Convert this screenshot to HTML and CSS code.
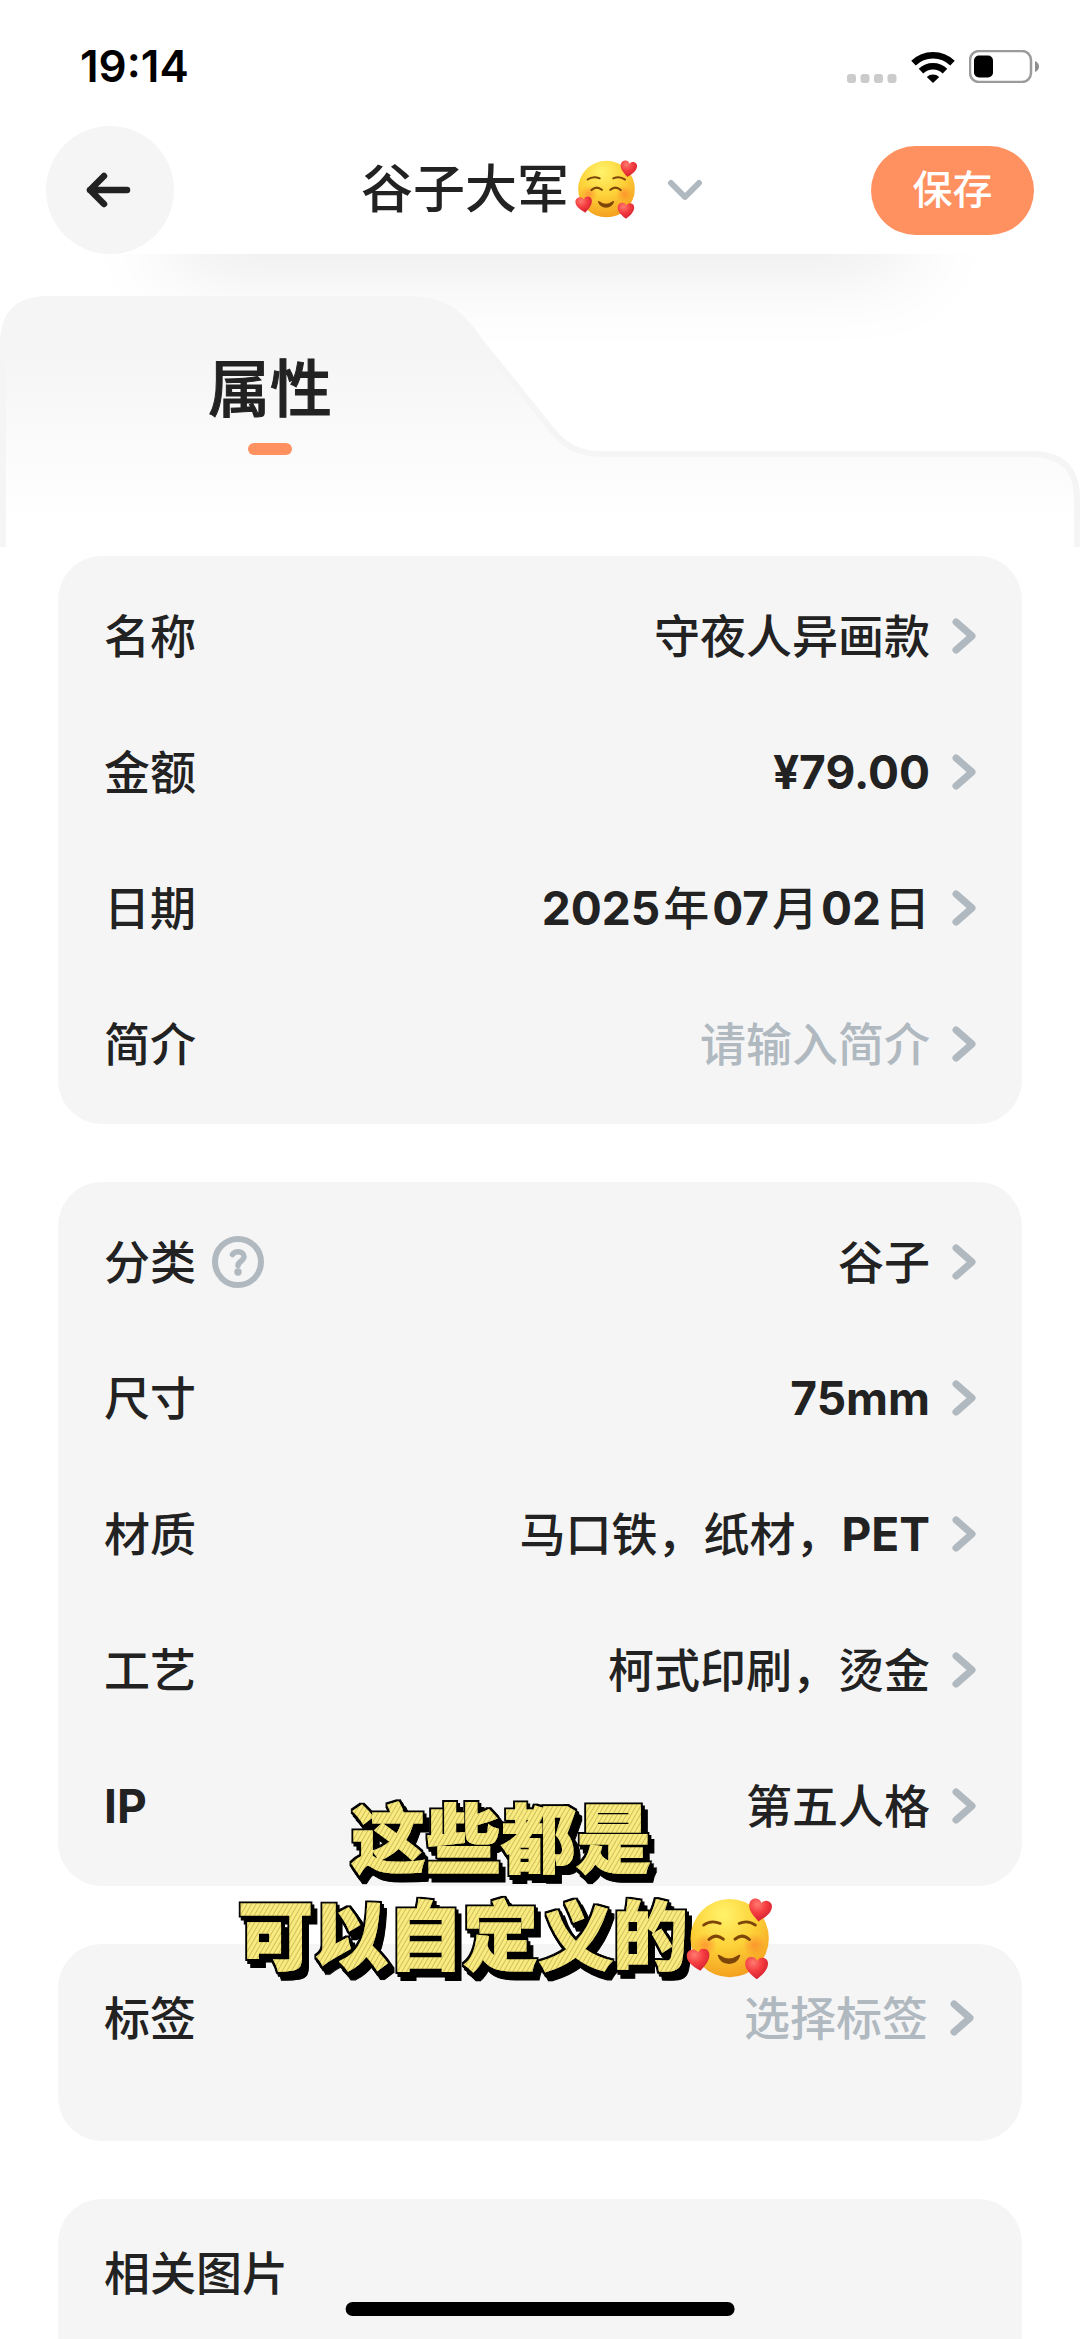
FILE: index.html
```html
<!DOCTYPE html>
<html lang="zh-CN">
<head>
<meta charset="utf-8">
<meta name="viewport" content="width=device-width, initial-scale=1">
<title>谷子大军</title>
<link rel="stylesheet" href="styles.css">
</head>
<body>
<svg class="defs" aria-hidden="true">
  <defs>
    <radialGradient id="face" cx="0.42" cy="0.2" r="0.85">
      <stop offset="0" stop-color="#fff36b"/>
      <stop offset="0.5" stop-color="#fdd138"/>
      <stop offset="1" stop-color="#f39a1c"/>
    </radialGradient>
    <radialGradient id="blush">
      <stop offset="0" stop-color="#ff7a2e" stop-opacity="0.6"/>
      <stop offset="1" stop-color="#ff7a2e" stop-opacity="0"/>
    </radialGradient>
    <radialGradient id="heartFill" cx="0.35" cy="0.25" r="0.8">
      <stop offset="0" stop-color="#ff7a70"/>
      <stop offset="0.5" stop-color="#f43b3f"/>
      <stop offset="1" stop-color="#cf1f31"/>
    </radialGradient>
    <path id="heart" fill="url(#heartFill)" d="M2 33C-12 22-34 7-34-13C-34-27-24-33-15-33C-7-33-2-29 1-22C5-29 11-33 18-32C28-31 35-24 34-12C32 8 14 22 2 33Z"/>
  </defs>
  <symbol id="emoji" viewBox="76 84 256 248">
    <circle cx="206" cy="204" r="117" fill="url(#face)"/>
    <circle cx="134" cy="224" r="34" fill="url(#blush)"/>
    <circle cx="280" cy="224" r="34" fill="url(#blush)"/>
    <g fill="none" stroke="#7d4508" stroke-linecap="round">
      <path stroke-width="8" d="M128 165Q150 148 178 160M234 160Q260 148 283 165"/>
      <path stroke-width="9" d="M144 208Q165 188 187 207M222 207Q243 188 265 208"/>
    </g>
    <path fill="#7d4508" d="M170 256Q172 251 178 256Q204 274 230 256Q236 251 238 256Q230 281 204 281Q178 281 170 256Z"/>
    <use href="#heart" transform="translate(296 121) rotate(10)"/>
    <use href="#heart" transform="translate(113 269) rotate(-6)"/>
    <use href="#heart" transform="translate(286 294) rotate(2)"/>
  </symbol>
  <symbol id="chevron" viewBox="0 0 24 36">
    <path d="M4 4L20 18L4 32" fill="none" stroke="currentColor" stroke-width="7" stroke-linecap="round" stroke-linejoin="round"/>
  </symbol>
</svg>

<div class="page">
  <header class="top">
    <div class="status">
      <time class="clock">19:14</time>
      <div class="indicators">
        <svg class="signal" viewBox="0 0 50 9" fill="#cbcbcb" aria-hidden="true">
          <rect width="9" height="9" rx="3"/><rect x="13.5" width="9" height="9" rx="3"/><rect x="27" width="9" height="9" rx="3"/><rect x="40.5" width="9" height="9" rx="3"/>
        </svg>
        <svg class="wifi" viewBox="0 0 44 32" aria-hidden="true">
          <g fill="none" stroke="#000" stroke-width="6.5">
            <path d="M2.5 12.2A28 28 0 0 1 41.5 12.2"/>
            <path d="M10 20.2A17.3 17.3 0 0 1 34 20.2"/>
          </g>
          <path d="M22 32L15.8 26A9 9 0 0 1 28.2 26Z"/>
        </svg>
        <svg class="battery" viewBox="0 0 70 33" aria-hidden="true">
          <rect x="1" y="1" width="61" height="31" rx="9" fill="none" stroke="#9b9b9b" stroke-width="2.5"/>
          <rect x="5" y="5.5" width="19" height="22" rx="5"/>
          <path d="M66 11Q70 13 70 16.5T66 22Z" fill="#8e8e8e"/>
        </svg>
      </div>
    </div>
    <nav class="nav">
      <button class="back" type="button" aria-label="返回">
        <svg viewBox="0 0 48 36" aria-hidden="true"><path d="M18 4L4 18L18 32M4 18H41" fill="none" stroke="currentColor" stroke-width="6.5" stroke-linecap="round" stroke-linejoin="round"/></svg>
      </button>
      <button class="switcher" type="button">
        <span>谷子大军</span>
        <svg class="title-emoji" role="img" aria-label="笑脸"><use href="#emoji"/></svg>
        <svg class="down" viewBox="0 0 36 22" aria-hidden="true"><path d="M4 4L18 18L32 4" fill="none" stroke="currentColor" stroke-width="6" stroke-linecap="round" stroke-linejoin="round"/></svg>
      </button>
      <button class="save" type="button">保存</button>
    </nav>
  </header>

  <section class="tabs">
    <svg class="folder" viewBox="0 0 1080 251" preserveAspectRatio="none" aria-hidden="true">
      <defs>
        <linearGradient id="folderFill" x1="0" y1="0" x2="0" y2="1">
          <stop offset="0.2" stop-color="#f5f5f5"/>
          <stop offset="0.9" stop-color="#fff"/>
        </linearGradient>
      </defs>
      <path fill="url(#folderFill)" d="M3 251V48Q3 3 48 3H410C444 3 462 18 480 45L540 119C557 142 570 158 600 158H1032Q1077 158 1077 203V251Z"/>
      <path fill="none" stroke="#f5f5f5" stroke-width="6" d="M3 251V48Q3 3 48 3H410C444 3 462 18 480 45L540 119C557 142 570 158 600 158H1032Q1077 158 1077 203V251"/>
    </svg>
    <h1 class="tab">属性</h1>
  </section>

  <main class="cards">
    <section class="card">
      <button class="row" type="button"><span class="label">名称</span><span class="value">守夜人异画款</span><svg class="go"><use href="#chevron"/></svg></button>
      <button class="row" type="button"><span class="label">金额</span><span class="value"><b>¥79.00</b></span><svg class="go"><use href="#chevron"/></svg></button>
      <button class="row" type="button"><span class="label">日期</span><span class="value date"><b>2025</b>年<b>07</b>月<b>02</b>日</span><svg class="go"><use href="#chevron"/></svg></button>
      <button class="row" type="button"><span class="label">简介</span><span class="value empty">请输入简介</span><svg class="go"><use href="#chevron"/></svg></button>
    </section>

    <section class="card">
      <button class="row" type="button">
        <span class="label">分类</span>
        <svg class="help" viewBox="0 0 52 52" role="img" aria-label="说明">
          <circle cx="26" cy="26" r="23" fill="none" stroke="currentColor" stroke-width="6"/>
          <path d="M20.5 18.5C22 16.2 24 15.8 26.3 15.8C29.5 15.8 32 17.8 32 20.6C32 25 26 25.4 26 29.5" fill="none" stroke="currentColor" stroke-width="5.5" stroke-linecap="round"/>
          <circle cx="26" cy="36" r="3.7" fill="currentColor"/>
        </svg>
        <span class="value">谷子</span><svg class="go"><use href="#chevron"/></svg>
      </button>
      <button class="row" type="button"><span class="label">尺寸</span><span class="value"><b>75mm</b></span><svg class="go"><use href="#chevron"/></svg></button>
      <button class="row" type="button"><span class="label">材质</span><span class="value">马口铁，纸材，<b>PET</b></span><svg class="go"><use href="#chevron"/></svg></button>
      <button class="row" type="button"><span class="label">工艺</span><span class="value">柯式印刷，烫金</span><svg class="go"><use href="#chevron"/></svg></button>
      <button class="row" type="button"><span class="label"><b>IP</b></span><span class="value">第五人格</span><svg class="go"><use href="#chevron"/></svg></button>
    </section>

    <section class="card tags">
      <button class="row" type="button"><span class="label">标签</span><span class="value empty">选择标签</span><svg class="go"><use href="#chevron"/></svg></button>
      <svg class="caption" viewBox="0 0 540 240" role="img" aria-label="这些都是可以自定义的">
        <defs>
          <pattern id="hatch" width="4" height="4" patternUnits="userSpaceOnUse" patternTransform="rotate(30)">
            <rect width="4" height="4" fill="#f9eb80"/>
            <rect width="1" height="4" fill="#cfc05c"/>
          </pattern>
          <filter id="sticker" x="-5%" y="-10%" width="112%" height="125%">
            <feMorphology in="SourceAlpha" operator="dilate" radius="2" result="edge"/>
            <feOffset in="edge" dx="2" dy="3" result="s1"/>
            <feOffset in="edge" dx="5" dy="7" result="s2"/>
            <feMerge><feMergeNode in="s2"/><feMergeNode in="s1"/><feMergeNode in="edge"/><feMergeNode in="SourceGraphic"/></feMerge>
          </filter>
        </defs>
        <text class="caption-text" filter="url(#sticker)" fill="url(#hatch)" stroke="url(#hatch)" stroke-width="1"><tspan x="115" y="97">这些都是</tspan><tspan x="2" y="194">可以自定义的</tspan></text>
        <use href="#emoji" x="450" y="128" width="86" height="83"/>
      </svg>
    </section>

    <section class="card images">
      <h2 class="row">相关图片</h2>
    </section>
  </main>
  <div class="home"></div>
</div>
</body>
</html>
```
FILE: styles.css
```css
* {
  box-sizing: border-box;
}

body {
  margin: 0;
  background: #fff;
  color: #222;
  font-family: Inter, "Noto Sans CJK SC", sans-serif;
  font-weight: 500;
}

button {
  margin: 0;
  padding: 0;
  border: 0;
  background: none;
  color: inherit;
  font: inherit;
  cursor: pointer;
}

svg {
  display: block;
  flex: none;
}

.defs {
  position: absolute;
  width: 0;
  height: 0;
}

.page {
  display: flex;
  flex-direction: column;
  min-height: 100vh;
}

/* Status bar and navigation */
.top {
  position: relative;
  z-index: 1;
  background: #fff;
}

.status {
  display: flex;
  align-items: center;
  justify-content: space-between;
  height: 126px;
  padding: 6px 41px 0 80px;
}

.clock {
  color: #000;
  font-size: 44px;
  font-weight: 600;
}

.indicators {
  display: flex;
  align-items: flex-end;
  gap: 14px;
}

.signal {
  width: 50px;
  height: 9px;
}

.wifi {
  width: 44px;
  height: 32px;
}

.battery {
  width: 70px;
  height: 33px;
}

.nav {
  display: grid;
  grid-template-columns: 1fr auto 1fr;
  align-items: center;
  padding: 0 46px;
}

.back {
  display: grid;
  place-items: center;
  width: 128px;
  height: 128px;
  border-radius: 50%;
  background: #f5f5f5;
}

.back svg {
  width: 48px;
  height: 36px;
}

.switcher {
  display: flex;
  align-items: center;
  padding-right: 16px;
  font-size: 52px;
  line-height: 60px;
}

.title-emoji {
  width: 62px;
  height: 60px;
  margin-left: 6px;
}

.down {
  width: 36px;
  height: 22px;
  margin-left: 30px;
  color: #b0b8c0;
}

.save {
  justify-self: end;
  width: 163px;
  height: 89px;
  border-radius: 45px;
  background: #ff9060;
  color: #fff;
  font-size: 40px;
  line-height: 46px;
}

/* Folder-shaped tab strip */
.tabs {
  position: relative;
  overflow: hidden;
  padding: 90px 0 101px;
}

.tabs::before {
  content: "";
  position: absolute;
  top: -40px;
  left: 16%;
  right: 16%;
  height: 40px;
  box-shadow: 0 0 90px rgba(0, 0, 0, 0.17);
}

.folder {
  position: absolute;
  top: 42px;
  left: 0;
  width: 100%;
  height: 251px;
}

.tab {
  position: relative;
  display: flex;
  flex-direction: column;
  align-items: center;
  gap: 7px;
  width: 50%;
  margin: 0;
  font-size: 62px;
  font-weight: 500;
  line-height: 92px;
  -webkit-text-stroke: 1px currentColor;
}

.tab::after {
  content: "";
  width: 44px;
  height: 12px;
  border-radius: 6px;
  background: #ff9060;
}

/* Attribute cards */
.cards {
  display: flex;
  flex: 1;
  flex-direction: column;
  gap: 58px;
  padding: 0 58px;
}

.card {
  padding: 12px 46px;
  border-radius: 44px;
  background: #f5f5f5;
}

.row {
  display: flex;
  align-items: center;
  width: 100%;
  height: 136px;
  margin: 0;
  font-size: 46px;
  font-weight: 500;
  line-height: 48px;
}

.row b {
  font-weight: 700;
}

.value {
  flex: 1;
  text-align: right;
}

.date b {
  margin: 0 3px;
}

.empty,
.go,
.help {
  color: #b0b8c0;
}

.go {
  width: 24px;
  height: 36px;
  margin-left: 22px;
}

.help {
  width: 52px;
  height: 52px;
  margin-left: 16px;
}

.tags {
  position: relative;
  padding: 6px 48px 55px 46px;
}

.images {
  flex: 1;
  padding: 6px 46px 0;
  border-radius: 44px 44px 0 0;
}

/* Sticker caption laid over the cards */
.caption {
  position: absolute;
  top: -174px;
  left: 178px;
  width: 540px;
  height: 240px;
}

.caption-text {
  font-family: "Noto Sans CJK SC", sans-serif;
  font-size: 75px;
  font-weight: 900;
}

.home {
  position: fixed;
  bottom: 23px;
  left: 50%;
  width: 36%;
  height: 14px;
  border-radius: 7px;
  background: #000;
  transform: translateX(-50%);
}
```
